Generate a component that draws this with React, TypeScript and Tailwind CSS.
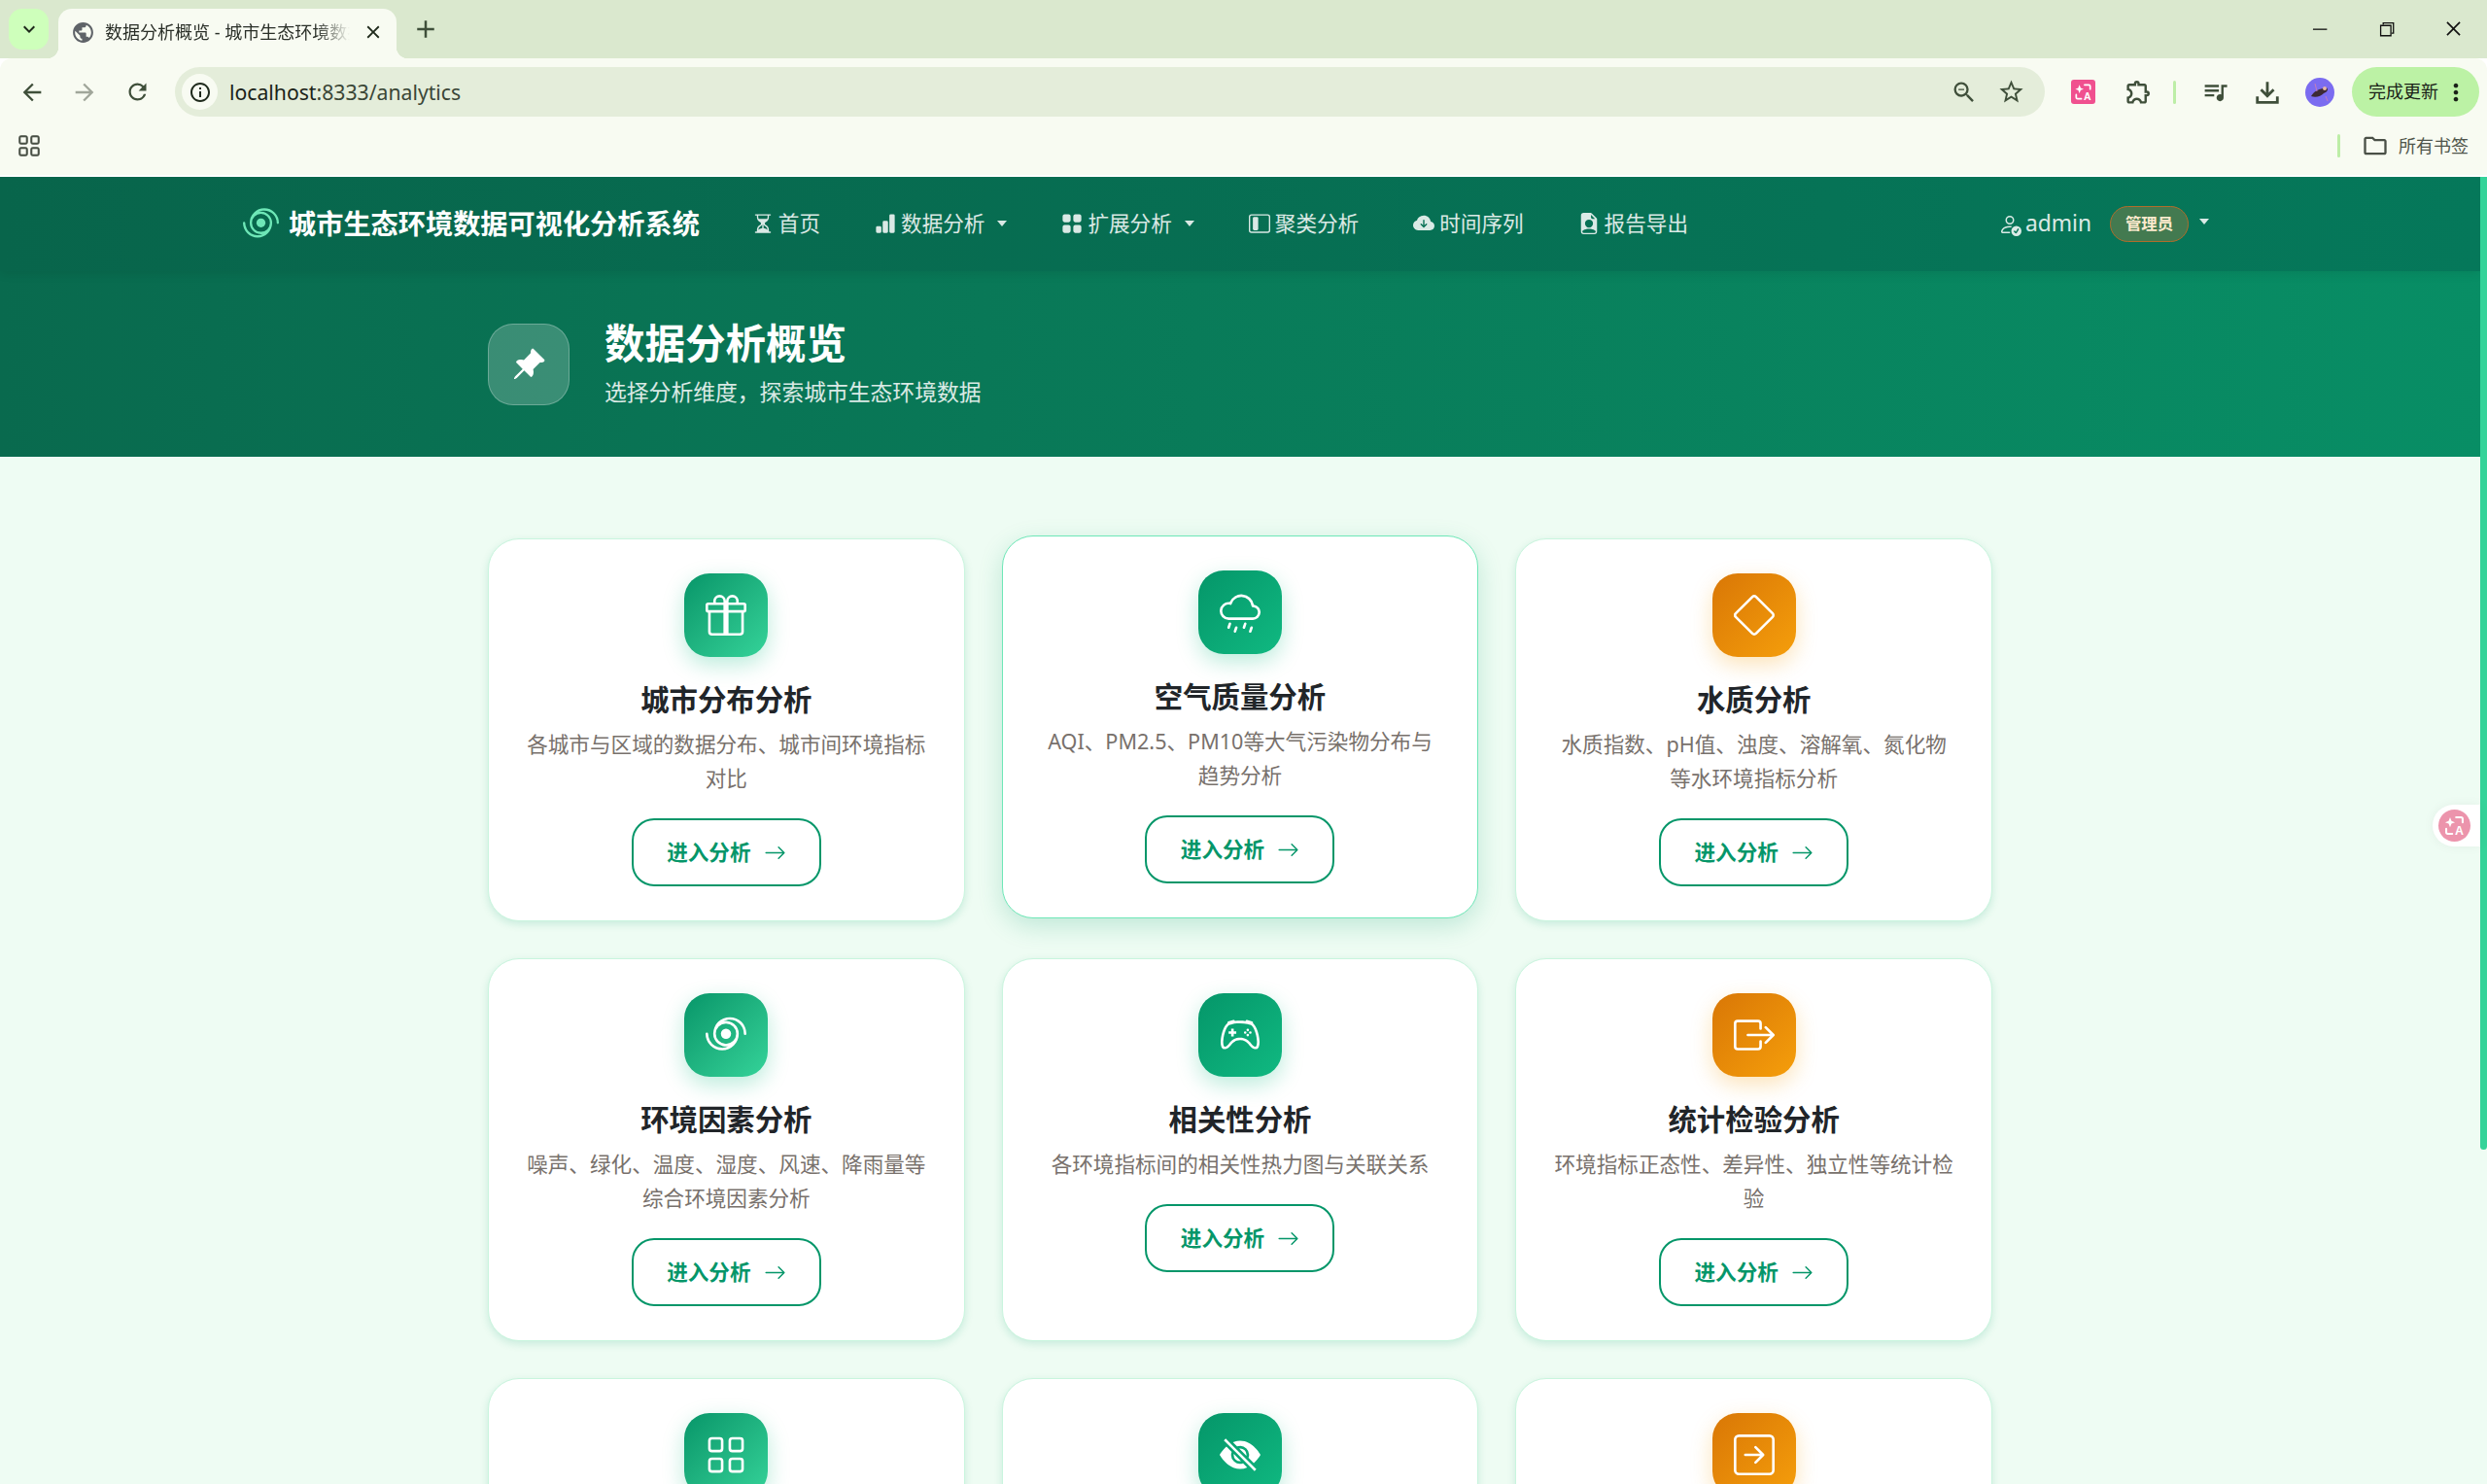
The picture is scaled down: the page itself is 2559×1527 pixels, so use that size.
import type { ReactNode } from "react";
import {
  BsArrowRight,
  BsArrowRightSquare,
  BsBarChartFill,
  BsBoxArrowRight,
  BsCloudArrowDownFill,
  BsCloudDrizzle,
  BsController,
  BsDiamond,
  BsEyeSlashFill,
  BsFileEarmarkPersonFill,
  BsGift,
  BsGrid,
  BsGridFill,
  BsHourglassSplit,
  BsLayoutSidebarInset,
  BsPersonCheck,
  BsPinAngleFill,
  BsTropicalStorm,
} from "react-icons/bs";
import {
  MdAdd,
  MdArrowBack,
  MdArrowForward,
  MdClose,
  MdInfoOutline,
  MdKeyboardArrowDown,
  MdMoreVert,
  MdOutlineExtension,
  MdOutlineFolder,
  MdOutlineQueueMusic,
  MdPublic,
  MdRefresh,
  MdStarBorder,
  MdZoomOut,
} from "react-icons/md";
import { VscChromeClose, VscChromeMinimize, VscChromeRestore } from "react-icons/vsc";

const GREEN = "bg-gradient-to-br from-[#059669] to-[#10b981] shadow-[0_8px_22px_rgba(16,185,129,0.28)]";
const MINT = "bg-gradient-to-br from-[#059669] to-[#34d399] shadow-[0_8px_22px_rgba(16,185,129,0.28)]";
const AMBER = "bg-gradient-to-br from-[#d97706] to-[#f59e0b] shadow-[0_8px_22px_rgba(245,158,11,0.28)]";

const cards = [
  { title: "城市分布分析", desc: "各城市与区域的数据分布、城市间环境指标对比", icon: <BsGift />, tone: MINT },
  { title: "空气质量分析", desc: "AQI、PM2.5、PM10等大气污染物分布与趋势分析", icon: <BsCloudDrizzle />, tone: GREEN, active: true },
  { title: "水质分析", desc: "水质指数、pH值、浊度、溶解氧、氮化物等水环境指标分析", icon: <BsDiamond />, tone: AMBER },
  { title: "环境因素分析", desc: "噪声、绿化、温度、湿度、风速、降雨量等综合环境因素分析", icon: <BsTropicalStorm />, tone: MINT },
  { title: "相关性分析", desc: "各环境指标间的相关性热力图与关联关系", icon: <BsController />, tone: GREEN },
  { title: "统计检验分析", desc: "环境指标正态性、差异性、独立性等统计检验", icon: <BsBoxArrowRight />, tone: AMBER },
  { icon: <BsGrid />, tone: MINT },
  { icon: <BsEyeSlashFill />, tone: GREEN },
  { icon: <BsArrowRightSquare />, tone: AMBER },
];

const navItems = [
  { label: "首页", icon: <BsHourglassSplit /> },
  { label: "数据分析", icon: <BsBarChartFill />, caret: true },
  { label: "扩展分析", icon: <BsGridFill />, caret: true },
  { label: "聚类分析", icon: <BsLayoutSidebarInset /> },
  { label: "时间序列", icon: <BsCloudArrowDownFill /> },
  { label: "报告导出", icon: <BsFileEarmarkPersonFill /> },
];

function Caret() {
  return <span className="w-0 h-0 border-x-[5.5px] border-t-[6px] border-x-transparent border-t-current" />;
}

function TranslateGlyph({ className }: { className: string }) {
  return (
    <svg viewBox="0 0 24 24" className={className} fill="none" stroke="currentColor" strokeWidth="1.8">
      <path d="M8 4.5l1.3 3.2 3.2 1.3-3.2 1.3L8 13.5l-1.3-3.2L3.500 9l3.200-1.300z" fill="currentColor" stroke="none" />
      <path d="M13.500 4.500h4.500a1.500 1.500 0 0 1 1.500 1.500v3M4.500 15v3a1.500 1.500 0 0 0 1.500 1.500h4" strokeLinecap="round" />
      <text x="12.500" y="20.500" fontSize="11" fontWeight="700" fill="currentColor" stroke="none" fontFamily="Liberation Sans, sans-serif">
        A
      </text>
    </svg>
  );
}

function ToolIcon({ className, children }: { className: string; children: ReactNode }) {
  return <div className={`flex h-[51px] items-center justify-center text-[#3f4f3a] ${className}`}>{children}</div>;
}

function BrowserChrome() {
  return (
    <header className="shrink-0 bg-white pb-[2px]">
      {/* tab strip */}
      <div className="flex h-[60px] items-start bg-[#dae8ce]">
        <div className="ml-[9px] mt-[9px] flex h-[42px] w-[41px] items-center justify-center rounded-[14px] bg-[#ceffbb] text-[24px] text-[#1f2a1c]">
          <MdKeyboardArrowDown />
        </div>
        <div className="relative ml-[10px] mt-[9px] flex h-[51px] w-[348px] items-center rounded-t-[14px] bg-[#f8fbf2] pb-[3px] pl-[13px]">
          <span className="absolute -left-[12px] bottom-0 h-[12px] w-[12px] bg-[radial-gradient(circle_at_0_0,transparent_12px,#f8fbf2_12.5px)]" />
          <span className="absolute -right-[12px] bottom-0 h-[12px] w-[12px] bg-[radial-gradient(circle_at_100%_0,transparent_12px,#f8fbf2_12.5px)]" />
          <MdPublic className="shrink-0 text-[25px] text-[#5f6368]" />
          <span className="ml-[10px] w-[252px] overflow-hidden whitespace-nowrap text-[18px] text-[#2a2f28] [mask-image:linear-gradient(90deg,#000_86%,transparent)]">
            数据分析概览 - 城市生态环境数据可视化分析系统
          </span>
          <MdClose className="ml-[13px] shrink-0 text-[22px] text-[#1f2a1c]" />
        </div>
        <MdAdd className="ml-[15px] mt-[15px] text-[30px] text-[#3f4f3a]" />
        <div className="ml-auto flex text-[21px] text-[#111]">
          <div className="flex h-[58px] w-[69px] items-center justify-center"><VscChromeMinimize /></div>
          <div className="flex h-[58px] w-[69px] items-center justify-center"><VscChromeRestore /></div>
          <div className="flex h-[58px] w-[69px] items-center justify-center"><VscChromeClose /></div>
        </div>
      </div>

      {/* toolbar */}
      <div className="flex h-[60px] items-start rounded-t-[12px] bg-[#f8fbf2] pl-[6px] pr-[8px] pt-[9px]">
        <ToolIcon className="w-[54px] text-[28px]"><MdArrowBack /></ToolIcon>
        <ToolIcon className="w-[54px] text-[28px] !text-[#a0a69a]"><MdArrowForward /></ToolIcon>
        <ToolIcon className="w-[54px] text-[27px]"><MdRefresh /></ToolIcon>
        <div className="ml-[12px] mr-[11px] flex h-[51px] flex-1 items-center rounded-full bg-[#e4edda] pl-[7px] pr-[20px]">
          <span className="flex h-[37px] w-[37px] items-center justify-center rounded-full bg-[#f8fbf2] text-[24px] text-[#1f2a1c]">
            <MdInfoOutline />
          </span>
          <span className="ml-[12px] text-[21.200px] text-[#3a4636]">
            <span className="text-[#1a2218]">localhost</span>:8333/analytics
          </span>
          <MdZoomOut className="ml-auto text-[28px] text-[#3f4f3a]" />
          <MdStarBorder className="ml-[20px] text-[29px] text-[#3f4f3a]" />
        </div>
        <ToolIcon className="w-[57px]">
          <span className="flex h-[25px] w-[25px] items-center justify-center rounded-[3px] bg-[#f0508f] text-white">
            <TranslateGlyph className="h-[23px] w-[23px]" />
          </span>
        </ToolIcon>
        <ToolIcon className="w-[56px] text-[29px]"><MdOutlineExtension /></ToolIcon>
        <div className="flex h-[51px] w-[18px] items-center justify-center">
          <span className="h-[24px] w-[3px] rounded-full bg-[#bdeea7]" />
        </div>
        <ToolIcon className="w-[67px] text-[29px]"><MdOutlineQueueMusic /></ToolIcon>
        <ToolIcon className="w-[40px]">
          <svg viewBox="0 0 24 24" className="h-[26px] w-[26px]" fill="none" stroke="currentColor" strokeWidth="2.600">
            <path d="M12 2v13M6 9.500l6 6 6-6M2.500 16v5.500h19V16" />
          </svg>
        </ToolIcon>
        <div className="flex h-[51px] w-[67px] items-center justify-center">
          <svg viewBox="0 0 30 30" className="h-[30px] w-[30px]">
            <circle cx="15" cy="15" r="15" fill="#7b6cf0" />
            <path d="M6 19c3-5 7-7 12-8 2-2 5-1 5 1s-2 3-4 4c-3 3-8 5-13 3z" fill="#3d2a34" />
            <circle cx="20" cy="11" r="2" fill="#e8b9a8" />
            <path d="M10 6l2 8M21 19l2 5" stroke="#c77db8" strokeWidth="1" />
          </svg>
        </div>
        <div className="flex h-[51px] w-[131px] items-center rounded-full bg-[#bcf2a5] pl-[17px] text-[18px] text-[#1a2218]">
          完成更新
          <MdMoreVert className="ml-[4px] text-[28px]" />
        </div>
      </div>

      {/* bookmarks bar */}
      <div className="flex h-[60px] items-center bg-[#f8fbf2] pl-[18px]">
        <BsGrid className="stroke-current stroke-[0.4] text-[24px] text-[#4a5047]" />
        <span className="ml-auto h-[24px] w-[3px] rounded-full bg-[#bdeea7]" />
        <MdOutlineFolder className="ml-[22px] text-[28px] text-[#4a5047]" />
        <span className="ml-[10px] mr-[19px] text-[18px] text-[#4f554b]">所有书签</span>
      </div>
    </header>
  );
}

function Navbar() {
  return (
    <nav className="relative z-10 h-[97px] shrink-0 bg-gradient-to-r from-[#08654b] to-[#05785a] shadow-[0_3px_10px_rgba(0,0,0,0.08)]">
      <div className="mx-auto flex h-full w-[2056px] items-center pr-[31px]">
        <BsTropicalStorm className="ml-[2px] text-[37px] text-[#6ee7b7]" />
        <span className="ml-[10px] text-[28.200px] font-bold text-white">城市生态环境数据可视化分析系统</span>
        <div className="ml-[54px] flex items-center gap-[56px] text-[21.600px] text-white/85">
          {navItems.map((item) => (
            <div key={item.label} className="flex items-center gap-[5px]">
              <span className="text-[22px]">{item.icon}</span>
              <span>{item.label}</span>
              {item.caret && <span className="ml-[8px] flex"><Caret /></span>}
            </div>
          ))}
        </div>
        <div className="ml-auto flex items-center text-white/85">
          <BsPersonCheck className="text-[24px]" />
          <span className="ml-[4px] text-[22.800px]">admin</span>
          <span className="ml-[19px] flex h-[37px] w-[81px] items-center justify-center rounded-full border-[1.5px] border-[#b06d2b] bg-[#437a50] text-[16.400px] font-bold text-[#fdeacd]">
            管理员
          </span>
          <span className="ml-[11px] flex -translate-y-[3px]"><Caret /></span>
        </div>
      </div>
    </nav>
  );
}

function Hero() {
  return (
    <section className="h-[191px] shrink-0 bg-gradient-to-r from-[#096a4e] to-[#088e65]">
      <div className="mx-auto flex h-full w-[1546px] items-center gap-[36px]">
        <div className="-ml-[1px] flex h-[84px] w-[84px] items-center justify-center rounded-[26px] border-[1.5px] border-white/25 bg-white/20 text-[36px] text-white">
          <BsPinAngleFill />
        </div>
        <div>
          <h1 className="text-[41.500px] font-bold leading-[50px] text-white">数据分析概览</h1>
          <p className="mt-[9px] text-[22.800px] leading-[34px] text-white/85">选择分析维度，探索城市生态环境数据</p>
        </div>
      </div>
    </section>
  );
}

function Card({ title, desc, icon, tone, active }: { title?: string; desc?: string; icon: ReactNode; tone: string; active?: boolean }) {
  return (
    <div
      className={`flex min-h-[394px] flex-col items-center rounded-[32px] border bg-white px-[36px] pt-[35px] text-center ${
        active
          ? "-translate-y-[3px] border-[#6ee7b7] shadow-[0_8px_26px_rgba(5,150,105,0.2)]"
          : "border-[#c9f5de] shadow-[0_3px_8px_rgba(5,150,105,0.16)]"
      }`}
    >
      <div className={`flex h-[86px] w-[86px] shrink-0 items-center justify-center rounded-[26px] text-[42px] text-white ${tone}`}>{icon}</div>
      {title && <h3 className="mt-[27px] text-[29.400px] font-bold leading-[35px] text-[#212529]">{title}</h3>}
      {desc && <p className="mt-[10px] text-[21.600px] leading-[35px] text-[#78716c]">{desc}</p>}
      {title && (
        <button className="mt-[24px] flex h-[70px] w-[195px] items-center justify-center gap-[13px] rounded-[23px] border-[2.500px] border-[#059669] text-[21.600px] font-bold text-[#059669]">
          进入分析
          <BsArrowRight className="text-[23px]" />
        </button>
      )}
    </div>
  );
}

export default function App() {
  return (
    <div className="flex h-[1527px] w-full flex-col overflow-hidden bg-[#eefcf3] font-['Noto_Sans','Noto_Sans_CJK_SC',sans-serif]">
      <BrowserChrome />
      <div className="relative flex min-h-0 flex-1">
        <main className="min-w-0 flex-1 overflow-hidden">
          <Navbar />
          <Hero />
          <div className="mx-auto mt-[84px] grid w-[1548px] grid-cols-3 gap-[38px]">
            {cards.map((card, index) => (
              <Card key={index} {...card} />
            ))}
          </div>
        </main>
        <div className="w-[7px] shrink-0">
          <div className="h-[1001px] rounded-b-[4px] bg-[#34d399]" />
        </div>
        <div className="absolute right-[7px] top-[646px] flex h-[43px] w-[49px] items-center rounded-l-full bg-white pl-[6px] shadow-[0_0_12px_rgba(0,0,0,0.05)]">
          <span className="flex h-[33px] w-[33px] items-center justify-center rounded-full bg-[#ec94ac] text-white">
            <TranslateGlyph className="h-[27px] w-[27px]" />
          </span>
        </div>
      </div>
    </div>
  );
}
